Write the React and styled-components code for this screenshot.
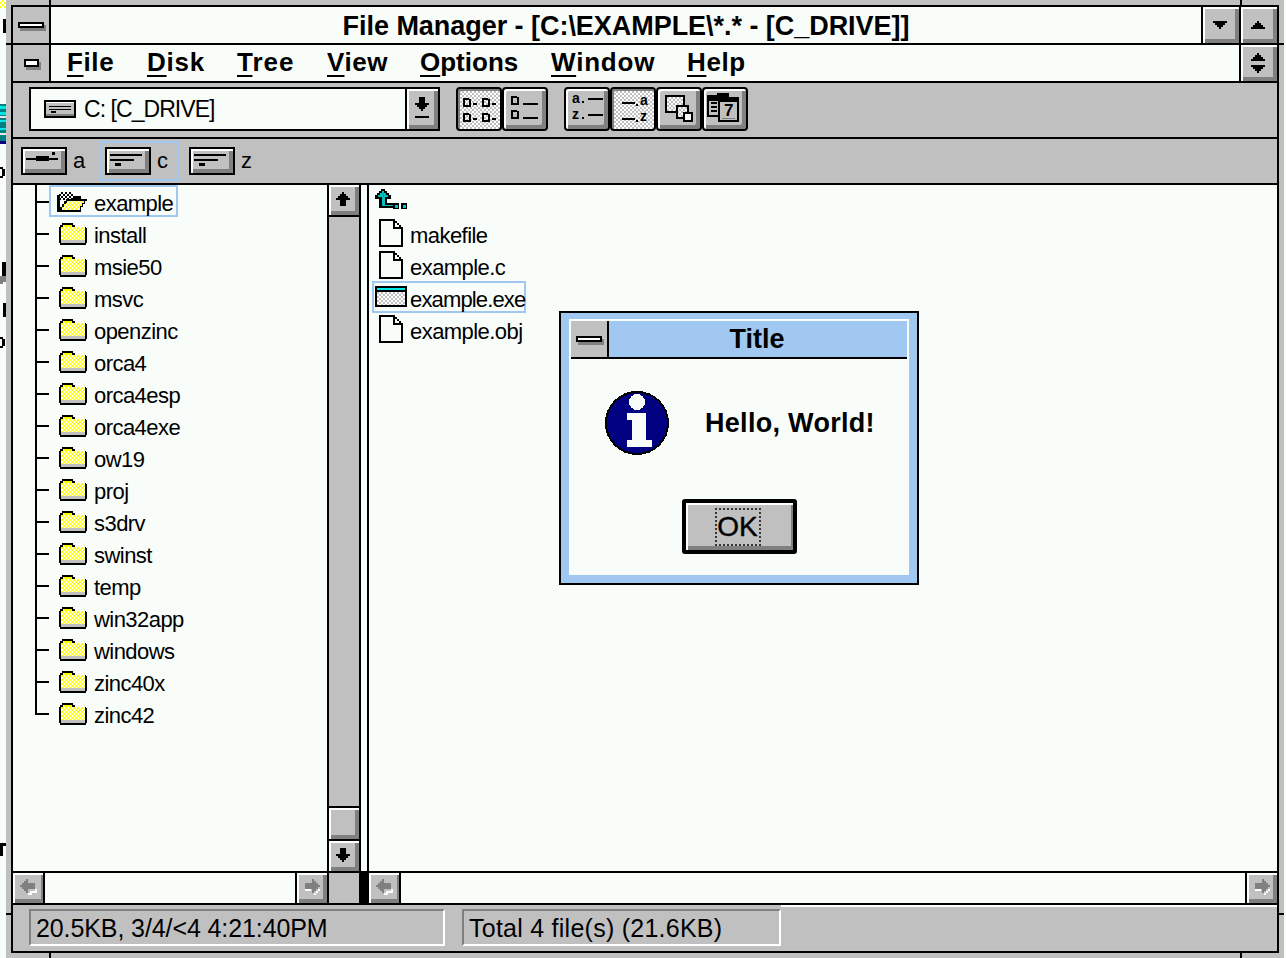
import React from 'react';
import styled, {createGlobalStyle, css} from "styled-components";

const GRAY = "#c0c0c0";
const DARK = "#808080";
const PAPER = "#f8fdf9";
const SELECT = "#a0c8f0";
const SANS = `"Liberation Sans", Arial, sans-serif`;

const GlobalStyle = createGlobalStyle`
  html, body {
    margin: 0;
    padding: 0;
    background: ${PAPER};
    overflow: hidden;
  }
  * { box-sizing: border-box; }
`;

const raised = css`
  background-color: ${GRAY};
  box-shadow: inset 2px 2px 0 #fff, inset -4px -4px 0 ${DARK};
`;

const Page = styled.div`
  position: relative;
  width: 1286px;
  height: 958px;
  padding-left: 6px;
  background: ${PAPER};
  overflow: hidden;
  font-family: ${SANS};
  color: #000;
`;

const Frame = styled.div`
  position: relative;
  width: 1278px;
  height: 958px;
  padding: 5px;
  background: ${GRAY};
`;

const Tick = styled.i`
  position: absolute;
  background: #000;
  ${p => p.$h ? css`left: ${p.$x}px; top: ${p.$y}px; width: 5px; height: 2px;`
              : css`left: ${p.$x}px; top: ${p.$y}px; width: 2px; height: 5px;`}
`;

const Scraps = styled.svg`
  position: absolute;
  left: 0;
  top: 0;
`;

const Window = styled.div`
  display: flex;
  flex-direction: column;
  height: 948px;
  border: 2px solid #000;
  background: ${PAPER};
`;

const BarRow = styled.div`
  display: flex;
  flex: none;
  height: 38px;
  border-bottom: 2px solid #000;
`;

const SysBox = styled.div`
  display: flex;
  flex: none;
  align-items: center;
  justify-content: center;
  width: 38px;
  background: ${GRAY};
  border-right: 2px solid #000;
`;

const SysDash = styled.span`
  display: block;
  width: ${p => p.$small ? 15 : 26}px;
  height: ${p => p.$small ? 8 : 6}px;
  background: #fff;
  border: 2px solid #000;
  box-shadow: 2px 3px 0 ${DARK};
`;

const TitleText = styled.div`
  flex: 1;
  text-align: center;
  font-size: 27px;
  font-weight: 700;
  line-height: 38px;
  letter-spacing: -0.04px;
  white-space: nowrap;
`;

const CaptionButton = styled.div`
  ${raised}
  display: flex;
  flex: none;
  align-items: center;
  justify-content: center;
  width: 38px;
  border-left: 2px solid #000;
  padding-right: 2px;
`;

const MenuBar = styled.nav`
  display: flex;
  flex: 1;
  padding-left: 16px;
`;

const MenuItem = styled.div`
  flex: none;
  width: ${p => p.$w}px;
  font-size: 26px;
  font-weight: 700;
  line-height: 35px;
  letter-spacing: ${p => p.$spacing}px;

  u {
    text-decoration-thickness: 2px;
    text-underline-offset: 4px;
  }
`;

const Toolbar = styled.div`
  display: flex;
  flex: none;
  gap: 16px;
  height: 56px;
  padding: 4px 0 0 16px;
  background: ${GRAY};
  border-bottom: 2px solid #000;
`;

const Combo = styled.div`
  display: flex;
  flex: none;
  width: 411px;
  height: 44px;
  border: 2px solid #000;
  background: ${PAPER};
`;

const ComboValue = styled.div`
  display: flex;
  flex: 1;
  align-items: center;
  gap: 8px;
  padding-left: 13px;
  font-size: 23px;
  letter-spacing: -0.95px;
`;

const ComboArrow = styled.div`
  ${raised}
  display: flex;
  flex: none;
  align-items: center;
  justify-content: center;
  width: 33px;
  border-left: 2px solid #000;
  padding-right: 2px;
`;

const ToolGroup = styled.div`
  display: flex;
  flex: none;
`;

const ToolButton = styled.div`
  display: flex;
  align-items: center;
  justify-content: center;
  width: 46px;
  height: 44px;
  border: 2px solid #000;
  border-radius: 4px;
  padding: 0 2px 2px 0;
  ${raised}
  ${p => p.$down && css`
    background: repeating-conic-gradient(${GRAY} 0 25%, #fff 0 50%) 0 0 / 4px 4px;
    box-shadow: inset 2px 2px 0 ${DARK};
    padding: 2px 0 0 2px;
  `}
`;

const DriveBar = styled.div`
  display: flex;
  flex: none;
  align-items: center;
  gap: 5px;
  height: 46px;
  padding-left: 3px;
  background: ${GRAY};
  border-bottom: 2px solid #000;
`;

const Drive = styled.div`
  display: flex;
  align-items: center;
  gap: 6px;
  width: 79px;
  height: 40px;
  padding-left: 3px;
  border: 2px solid ${p => p.$active ? SELECT : "transparent"};
  font-size: 22px;
`;

const DriveKey = styled.div`
  ${raised}
  flex: none;
  display: flex;
  width: 46px;
  height: 28px;
  border: 2px solid #000;
`;

const Panes = styled.div`
  display: flex;
  flex: none;
  height: 688px;
  border-bottom: 2px solid #000;
`;

const TreePane = styled.div`
  flex: none;
  width: 314px;
`;

const TreeRow = styled.div`
  position: relative;
  height: 32px;
  padding-left: 36px;

  &::before {
    content: "";
    position: absolute;
    left: 22px;
    top: 0;
    width: 2px;
    height: ${p => p.$last ? 18 : 32}px;
    background: #000;
  }
  &::after {
    content: "";
    position: absolute;
    left: 24px;
    top: 16px;
    width: 12px;
    height: 2px;
    background: #000;
  }
`;

const ItemLabel = styled.div`
  display: inline-flex;
  align-items: center;
  width: ${p => p.$w ? `${p.$w}px` : "auto"};
  height: 32px;
  padding: 2px 3px 0 ${p => p.$pad}px;
  gap: ${p => p.$gap}px;
  border: 2px solid ${p => p.$active ? SELECT : "transparent"};
  font-size: 22px;
  letter-spacing: ${p => p.$tight ? -0.85 : -0.55}px;
  white-space: nowrap;
`;

const ItemText = styled.span`
  padding-top: 4px;
`;

const Lift = styled.span`
  display: block;
  flex: none;
  margin-top: -${p => p.$by}px;
`;

const VScroll = styled.div`
  display: flex;
  flex: none;
  flex-direction: column;
  width: 34px;
  background: ${GRAY};
  border-left: 2px solid #000;
  border-right: 2px solid #000;
`;

const ScrollButton = styled.div`
  ${raised}
  display: flex;
  flex: none;
  align-items: center;
  justify-content: center;
  width: 30px;
  height: 30px;
  padding: 0 2px 2px 0;
`;

const Track = styled.div`
  flex: 1;
  border-top: 2px solid #000;
`;

const Thumb = styled.div`
  ${raised}
  flex: none;
  height: 35px;
  border-top: 2px solid #000;
  border-bottom: 2px solid #000;
`;

const Splitter = styled.div`
  flex: none;
  width: 6px;
`;

const FilePane = styled.div`
  flex: 1;
  border-left: 2px solid #000;
  padding-left: 3px;
`;

const FileRow = styled.div`
  height: 32px;
`;

const UpRow = styled.div`
  display: flex;
  height: 32px;
  padding: 4px 0 0 3px;
`;

const HBarRow = styled.div`
  display: flex;
  flex: none;
  height: 32px;
  border-bottom: 2px solid #000;
`;

const HScroll = styled.div`
  display: flex;
  flex: ${p => p.$w ? "none" : "1"};
  width: ${p => p.$w ? `${p.$w}px` : "auto"};
  justify-content: space-between;
`;

const HButton = styled.div`
  ${raised}
  display: flex;
  flex: none;
  align-items: center;
  justify-content: center;
  width: 32px;
  height: 30px;
  padding-bottom: 2px;
  ${p => p.$left ? css`border-right: 2px solid #000; box-shadow: inset 2px 2px 0 #fff, inset -2px -4px 0 ${DARK};`
                 : css`border-left: 2px solid #000;`}
`;

const Corner = styled.div`
  flex: none;
  width: 42px;
  background: ${GRAY};
  border-left: 2px solid #000;
  border-right: 10px solid #000;
`;

const StatusBar = styled.div`
  position: relative;
  display: flex;
  flex: none;
  gap: 17px;
  height: 46px;
  padding: 4px 0 0 16px;
  background: ${GRAY};

  &::after {
    content: "";
    position: absolute;
    left: 768px;
    right: 0;
    top: 0;
    height: 2px;
    background: #fff;
  }
`;

const StatusPanel = styled.div`
  flex: none;
  width: ${p => p.$w}px;
  height: 37px;
  padding: 2px 0 0 5px;
  border-style: solid;
  border-width: 2px;
  border-color: ${DARK} #fff #fff ${DARK};
  font-size: 25px;
  line-height: 31px;
  letter-spacing: ${p => p.$spacing}px;
  white-space: nowrap;
`;

const Dialog = styled.div`
  position: absolute;
  left: 559px;
  top: 311px;
  width: 360px;
  height: 274px;
  padding: 6px 8px 8px;
  background: ${SELECT};
  border: 2px solid #000;
`;

const DialogInner = styled.div`
  display: flex;
  flex-direction: column;
  height: 100%;
  padding: 2px;
  background: ${PAPER};
`;

const DialogTitle = styled.div`
  display: flex;
  flex: none;
  height: 38px;
  background: ${SELECT};
  border-bottom: 2px solid #000;
`;

const DialogCaption = styled.div`
  flex: 1;
  text-align: center;
  font-size: 27px;
  font-weight: 700;
  line-height: 37px;
  padding-right: 2px;
`;

const DialogBody = styled.div`
  display: flex;
  align-items: center;
  gap: 36px;
  height: 96px;
  padding: 32px 0 0 34px;
`;

const Message = styled.div`
  font-size: 27px;
  font-weight: 700;
  letter-spacing: 0.3px;
  white-space: nowrap;
`;

const OkRow = styled.div`
  display: flex;
  padding: 44px 0 0 111px;
`;

const OkButton = styled.div`
  display: flex;
  align-items: center;
  justify-content: center;
  width: 115px;
  height: 55px;
  padding-right: 4px;
  background: ${GRAY};
  border: 4px solid #000;
  border-radius: 3px;
  box-shadow: inset 2px 2px 0 #fff, inset -2px -4px 0 ${DARK};
`;

const OkFocus = styled.div`
  width: 46px;
  height: 38px;
  text-align: center;
  border: 2px dotted #333;
  font-size: 28px;
  line-height: 34px;
  -webkit-text-stroke: 0.4px #000;
`;

// shared dither fills for the little bitmaps
const Patterns = () => (
  <svg width="0" height="0" style={{position: "absolute"}}>
    <defs>
      <pattern id="dYellow" width="4" height="4" patternUnits="userSpaceOnUse">
        <rect width="4" height="4" fill="#ffff00"/>
        <rect width="2" height="2" fill="#fff"/>
        <rect x="2" y="2" width="2" height="2" fill="#fff"/>
      </pattern>
      <pattern id="dBlack" width="4" height="4" patternUnits="userSpaceOnUse">
        <rect width="4" height="4" fill="#fff"/>
        <rect width="2" height="2" fill="#000"/>
        <rect x="2" y="2" width="2" height="2" fill="#000"/>
      </pattern>
      <pattern id="dGray" width="4" height="4" patternUnits="userSpaceOnUse">
        <rect width="4" height="4" fill="#fff"/>
        <rect width="2" height="2" fill={GRAY}/>
        <rect x="2" y="2" width="2" height="2" fill={GRAY}/>
      </pattern>
    </defs>
  </svg>
);

const Pix = ({w, h, children}) => (
  <svg width={w} height={h} viewBox={`0 0 ${w} ${h}`} shapeRendering="crispEdges" style={{display: "block", flex: "none"}}>
    {children}
  </svg>
);

const Folder = () => (
  <Pix w={28} h={22}>
    <path d="M3 0h11v2h2v2h11v1h1v15h-1v2H1v-2H0V4h1V2h2z" fill="#000"/>
    <rect x="4" y="2" width="9" height="2" fill="#ffff00"/>
    <rect x="2" y="4" width="24" height="13" fill="url(#dYellow)"/>
    <rect x="2" y="17" width="24" height="3" fill={GRAY}/>
  </Pix>
);

const OpenFolder = () => (
  <Pix w={30} h={20}>
    <path d="M2 2h2V0h10v2h2v2h6v4H2z" fill="url(#dBlack)"/>
    <path d="M0 3h3v17H0zM16 4h8v3h-8z" fill="#000"/>
    <path d="M9 7h21v2h-2v3h-2v3h-2v5H3v-5h2v-3h2v-3h2z" fill="#000"/>
    <path d="M10 9h17v2h-2v3h-2v4H5v-3h2v-3h2v-1h1z" fill="url(#dYellow)"/>
  </Pix>
);

const Doc = () => (
  <Pix w={24} h={28}>
    <path d="M0 0h16v2h2v2h2v2h2v2h2v20H0z" fill="#000"/>
    <path d="M2 2h12v8h8v16H2z" fill={PAPER}/>
    <path d="M16 4h2v2h2v2h-4z" fill={PAPER}/>
  </Pix>
);

const ExeIcon = () => (
  <Pix w={32} h={21}>
    <rect width="32" height="21" fill="#000"/>
    <rect x="2" y="2" width="28" height="2" fill="#00e8e8"/>
    <rect x="2" y="6" width="28" height="13" fill="url(#dGray)"/>
  </Pix>
);

const UpDir = () => (
  <Pix w={32} h={20}>
    <path d="M6 0h4v2h2v2h2v2h2v4h-4v4h6v5H4V10H0V6h2V4h2V2h2z" fill="#000"/>
    <path d="M7 2h2v2h2v2h2v2h-3v8h8v1H7V8H3V6h2V4h2z" fill="#00c0c0"/>
    <path d="M8 4h1v4H8z" fill="#009898"/>
    <path d="M18 14h6v6h-6zM26 14h6v6h-6z" fill="#000"/>
    <path d="M20 16h3v3h-3zM28 16h3v3h-3z" fill="#00c8c8"/>
  </Pix>
);

const ArrowUp = () => (
  <Pix w={16} h={14}><path d="M7 0h2v2h2v2h2v2h2v2h-4v6H5V8H1V6h2V4h2V2h2z" fill="#000"/></Pix>
);
const ArrowDown = () => (
  <Pix w={16} h={14}><path d="M5 0h6v6h4v2h-2v2h-2v2H9v2H7v-2H5v-2H3V8H1V6h4z" fill="#000"/></Pix>
);
const ComboDown = () => (
  <Pix w={16} h={24}>
    <path d="M5 0h6v6h4v2h-2v2h-2v2H9v2H7v-2H5v-2H3V8H1V6h4z" fill="#000"/>
    <rect x="1" y="19" width="14" height="2" fill="#000"/>
  </Pix>
);
const TriDown = () => (
  <Pix w={14} h={8}><path d="M0 0h14v2h-2v2h-2v2H8v2H6V6H4V4H2V2H0z" fill="#000"/></Pix>
);
const TriUp = () => (
  <Pix w={14} h={8}><path d="M6 0h2v2h2v2h2v2h2v2H0V6h2V4h2V2h2z" fill="#000"/></Pix>
);
const Restore = () => (
  <Pix w={14} h={20}>
    <path d="M6 0h2v2h2v2h2v2h2v2H0V6h2V4h2V2h2z" fill="#000"/>
    <path d="M0 12h14v2h-2v2h-2v2H8v2H6v-2H4v-2H2v-2H0z" fill="#000"/>
  </Pix>
);
const GhostLeft = () => (
  <Pix w={18} h={16}>
    <path d="M7 0h2v4h7v6H9v4H7v-2H5v-2H3V8H1V6h2V4h2V2h2z" fill={DARK}/>
    <path d="M9 14h2v-2h5v-2h2v4h-5v2H9z" fill="#fff"/>
  </Pix>
);
const GhostRight = () => (
  <Pix w={18} h={16}>
    <path d="M9 0h2v2h2v2h2v2h2v2h-2v2h-2v2h-2v2H9v-4H2V4h7z" fill={DARK}/>
    <path d="M2 10h6v2H2zM15 10h2v2h-2v2h-2v2h-2v-2h2v-2h2z" fill="#fff"/>
  </Pix>
);

const FloppyGlyph = () => (
  <Pix w={36} h={20}>
    <rect x="3" y="9" width="32" height="2" fill="#000"/>
    <rect x="13" y="7" width="13" height="5" fill="#000"/>
    <rect x="29" y="3" width="3" height="3" fill="#000"/>
  </Pix>
);
const DiskGlyph = () => (
  <Pix w={36} h={20}>
    <rect x="3" y="5" width="32" height="2" fill="#000"/>
    <rect x="3" y="10" width="24" height="2" fill="#000"/>
    <rect x="8" y="14" width="6" height="3" fill="#000"/>
  </Pix>
);
const ComboDisk = () => (
  <Pix w={32} h={18}>
    <rect width="32" height="18" fill="#000"/>
    <rect x="2" y="2" width="28" height="13" fill={GRAY}/>
    <rect x="2" y="2" width="28" height="1" fill="#fff"/>
    <rect x="2" y="14" width="28" height="2" fill={DARK}/>
    <rect x="5" y="6" width="22" height="1" fill="#000"/>
    <rect x="5" y="9" width="22" height="1" fill="#000"/>
    <rect x="7" y="11" width="5" height="2" fill="#000"/>
  </Pix>
);

const TinyDoc = ({x, y}) => (
  <path d={`M${x} ${y}h6v1h2v8h-8zM${x + 2} ${y + 2}v5h4v-5z`} fill="#000" fillRule="evenodd"/>
);
const IconsSmall = () => (
  <Pix w={34} h={28}>
    <TinyDoc x={0} y={2}/><rect x="10" y="7" width="4" height="2" fill="#000"/>
    <TinyDoc x={19} y={2}/><rect x="29" y="7" width="4" height="2" fill="#000"/>
    <TinyDoc x={0} y={17}/><rect x="10" y="22" width="4" height="2" fill="#000"/>
    <TinyDoc x={19} y={17}/><rect x="29" y="22" width="4" height="2" fill="#000"/>
  </Pix>
);
const ListDetail = () => (
  <Pix w={34} h={28}>
    <TinyDoc x={4} y={2}/><rect x="16" y="9" width="15" height="2" fill="#000"/>
    <TinyDoc x={4} y={16}/><rect x="16" y="23" width="15" height="2" fill="#000"/>
  </Pix>
);
const SortText = ({x, y, children}) => (
  <text x={x} y={y} fontFamily="Liberation Sans, sans-serif" fontSize="14" fontWeight="700" shapeRendering="auto">{children}</text>
);
const SortLeft = () => (
  <Pix w={34} h={36}>
    <SortText x={3} y={13}>a</SortText>
    <rect x="13" y="11" width="2" height="2" fill="#000"/>
    <rect x="19" y="8" width="15" height="2" fill="#000"/>
    <SortText x={3} y={29}>z</SortText>
    <rect x="13" y="27" width="2" height="2" fill="#000"/>
    <rect x="19" y="24" width="15" height="2" fill="#000"/>
  </Pix>
);
const SortRight = () => (
  <Pix w={34} h={36}>
    <rect x="5" y="10" width="13" height="2" fill="#000"/>
    <rect x="19" y="12" width="2" height="2" fill="#000"/>
    <SortText x={23} y={13}>a</SortText>
    <rect x="5" y="26" width="13" height="2" fill="#000"/>
    <rect x="19" y="28" width="2" height="2" fill="#000"/>
    <SortText x={23} y={29}>z</SortText>
  </Pix>
);
const Overlap = () => (
  <Pix w={30} h={30}>
    <rect x="2" y="2" width="20" height="18" fill="#000"/>
    <rect x="4" y="4" width="16" height="14" fill="url(#dGray)"/>
    <rect x="13" y="12" width="13" height="14" fill="#000"/>
    <rect x="15" y="14" width="9" height="10" fill="url(#dGray)"/>
    <rect x="20" y="19" width="10" height="10" fill="#000"/>
    <rect x="22" y="21" width="6" height="6" fill={PAPER}/>
  </Pix>
);
const Props = () => (
  <Pix w={34} h={30}>
    <path d="M0 2h10V0h12v4h10v4H12v16H0z" fill="#000"/>
    <rect x="2" y="8" width="9" height="14" fill={GRAY}/>
    <path d="M4 9h6v2H4zM4 13h6v2H4zM4 17h6v2H4z" fill="#000"/>
    <rect x="11" y="7" width="21" height="22" fill="#000"/>
    <rect x="13" y="9" width="17" height="18" fill={GRAY}/>
    <rect x="15" y="25" width="13" height="1" fill={DARK}/>
    <text x="17" y="23" fontFamily="Liberation Sans, sans-serif" fontSize="17" fontWeight="700" shapeRendering="auto">7</text>
  </Pix>
);

const InfoIcon = () => (
  <svg width="64" height="64" viewBox="0 0 64 64" shapeRendering="crispEdges" style={{display: "block", flex: "none"}}>
    <circle cx="32" cy="32" r="31" fill="#000080" stroke="#000" strokeWidth="2"/>
    <circle cx="32" cy="11" r="8" fill={PAPER}/>
    <path d="M22 22h19v27h6v7H22v-7h5V29h-5z" fill={PAPER}/>
  </svg>
);

const DesktopScraps = () => (
  <Scraps width="6" height="958" shapeRendering="crispEdges">
    <rect x="0" y="0" width="6" height="8" fill="url(#dYellow)"/>
    <rect x="3" y="19" width="3" height="14" fill="#000"/>
    <rect x="0" y="104" width="6" height="40" fill="#008080"/>
    <path d="M0 106h6v3H0zM0 112h6v3H0zM0 120h6v2H0zM0 128h6v2H0z" fill="#00e8e8"/>
    <path d="M0 116h6v2H0zM0 133h6v2H0z" fill="#e8e8e8"/>
    <rect x="0" y="141" width="6" height="3" fill="#000080"/>
    <path d="M0 167h3v2h2v7H3v2H0v-2h2v-7H0z" fill="#000"/>
    <path d="M2 262h4v14H2z" fill="#000"/>
    <path d="M0 276h6v6H3v2H0z" fill={DARK}/>
    <rect x="3" y="303" width="3" height="14" fill="#000"/>
    <path d="M0 337h3v2h2v7H3v2H0v-2h2v-7H0z" fill="#000"/>
    <path d="M0 843h6v3H3v10H0z" fill="#000"/>
  </Scraps>
);

const folders = ["install", "msie50", "msvc", "openzinc", "orca4", "orca4esp", "orca4exe", "ow19", "proj", "s3drv", "swinst", "temp", "win32app", "windows", "zinc40x", "zinc42"];
const menus = [["F", "ile", 80, 0.6], ["D", "isk", 90, 0.8], ["T", "ree", 90, 1], ["V", "iew", 93, 0.6], ["O", "ptions", 131, 0], ["W", "indow", 136, 0.8], ["H", "elp", 100, 0.6]];

const App = () => {
  return (
    <Page>
      <GlobalStyle/>
      <Patterns/>
      <DesktopScraps/>
      <Frame>
        <Tick $x={43} $y={0}/>
        <Tick $x={1234} $y={0}/>
        <Tick $x={43} $y={953}/>
        <Tick $x={1234} $y={953}/>
        <Tick $h $x={0} $y={43}/>
        <Tick $h $x={0} $y={913}/>
        <Tick $h $x={1273} $y={43}/>
        <Tick $h $x={1273} $y={913}/>
        <Window>
          <BarRow>
            <SysBox><SysDash/></SysBox>
            <TitleText>File Manager - [C:\EXAMPLE\*.* - [C_DRIVE]]</TitleText>
            <CaptionButton><TriDown/></CaptionButton>
            <CaptionButton><TriUp/></CaptionButton>
          </BarRow>
          <BarRow>
            <SysBox><SysDash $small/></SysBox>
            <MenuBar>
              {menus.map(([key, rest, w, spacing]) => (
                <MenuItem key={key} $w={w} $spacing={spacing}><u>{key}</u>{rest}</MenuItem>
              ))}
            </MenuBar>
            <CaptionButton><Restore/></CaptionButton>
          </BarRow>
          <Toolbar>
            <Combo>
              <ComboValue><ComboDisk/>C: [C_DRIVE]</ComboValue>
              <ComboArrow><ComboDown/></ComboArrow>
            </Combo>
            <ToolGroup>
              <ToolButton $down><IconsSmall/></ToolButton>
              <ToolButton><ListDetail/></ToolButton>
            </ToolGroup>
            <ToolGroup>
              <ToolButton><SortLeft/></ToolButton>
              <ToolButton $down><SortRight/></ToolButton>
              <ToolButton><Overlap/></ToolButton>
              <ToolButton><Props/></ToolButton>
            </ToolGroup>
          </Toolbar>
          <DriveBar>
            <Drive><DriveKey><FloppyGlyph/></DriveKey>a</Drive>
            <Drive $active><DriveKey><DiskGlyph/></DriveKey>c</Drive>
            <Drive><DriveKey><DiskGlyph/></DriveKey>z</Drive>
          </DriveBar>
          <Panes>
            <TreePane>
              <TreeRow>
                <ItemLabel $active $pad={6} $gap={7}><OpenFolder/><ItemText>example</ItemText></ItemLabel>
              </TreeRow>
              {folders.map((name, i) => (
                <TreeRow key={name} $last={i === folders.length - 1}>
                  <ItemLabel $pad={8} $gap={7}><Folder/><ItemText>{name}</ItemText></ItemLabel>
                </TreeRow>
              ))}
            </TreePane>
            <VScroll>
              <ScrollButton><ArrowUp/></ScrollButton>
              <Track/>
              <Thumb/>
              <ScrollButton><ArrowDown/></ScrollButton>
            </VScroll>
            <Splitter/>
            <FilePane>
              <UpRow><UpDir/></UpRow>
              <FileRow><ItemLabel $pad={5} $gap={7}><Lift $by={2}><Doc/></Lift><ItemText>makefile</ItemText></ItemLabel></FileRow>
              <FileRow><ItemLabel $pad={5} $gap={7}><Lift $by={2}><Doc/></Lift><ItemText>example.c</ItemText></ItemLabel></FileRow>
              <FileRow><ItemLabel $active $tight $w={154} $pad={1} $gap={3}><Lift $by={4}><ExeIcon/></Lift><ItemText>example.exe</ItemText></ItemLabel></FileRow>
              <FileRow><ItemLabel $pad={5} $gap={7}><Lift $by={2}><Doc/></Lift><ItemText>example.obj</ItemText></ItemLabel></FileRow>
            </FilePane>
          </Panes>
          <HBarRow>
            <HScroll $w={314}>
              <HButton $left><GhostLeft/></HButton>
              <HButton><GhostRight/></HButton>
            </HScroll>
            <Corner/>
            <HScroll>
              <HButton $left><GhostLeft/></HButton>
              <HButton><GhostRight/></HButton>
            </HScroll>
          </HBarRow>
          <StatusBar>
            <StatusPanel $w={416} $spacing={-0.1}>20.5KB, 3/4/&lt;4 4:21:40PM</StatusPanel>
            <StatusPanel $w={319} $spacing={0.25}>Total 4 file(s) (21.6KB)</StatusPanel>
          </StatusBar>
        </Window>
      </Frame>
      <Dialog>
        <DialogInner>
          <DialogTitle>
            <SysBox><SysDash/></SysBox>
            <DialogCaption>Title</DialogCaption>
          </DialogTitle>
          <DialogBody>
            <InfoIcon/>
            <Message>Hello, World!</Message>
          </DialogBody>
          <OkRow>
            <OkButton><OkFocus>OK</OkFocus></OkButton>
          </OkRow>
        </DialogInner>
      </Dialog>
    </Page>
  );
};

export default App;
